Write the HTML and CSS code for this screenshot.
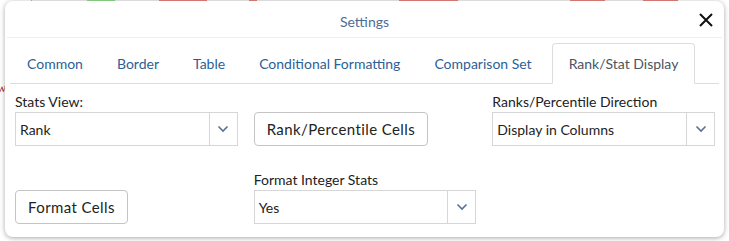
FILE: index.html
```html
<!DOCTYPE html>
<html>
<head>
<meta charset="utf-8">
<link rel="stylesheet" href="styles.css">
</head>
<body>
<div class="page">
  <div class="strip">
    <span class="c w31"></span><span class="c line"></span><span class="c w55"></span><span class="c green w28"></span><span class="c w44"></span><span class="c red w48"></span><span class="c w42"></span><span class="c red w8"></span><span class="c w142"></span><span class="c red w59"></span><span class="c w112"></span><span class="c red w35"></span><span class="c w38"></span><span class="c red w35"></span>
  </div>
  <div class="stray">w</div>
  <div class="vline"></div>
</div>

<div class="modal">
  <div class="modal-header">
    <span class="modal-title">Settings</span>
    <button class="close" aria-label="Close">
      <svg width="14" height="14" viewBox="0 0 14 14"><path d="M1 1 L13 13 M13 1 L1 13" stroke="#111" stroke-width="2" fill="none"/></svg>
    </button>
  </div>
  <div class="tabs-wrap">
    <ul class="tabs">
      <li class="tab">Common</li>
      <li class="tab">Border</li>
      <li class="tab">Table</li>
      <li class="tab">Conditional Formatting</li>
      <li class="tab">Comparison Set</li>
      <li class="tab active">Rank/Stat Display</li>
    </ul>
  </div>
  <div class="body">
    <div class="grid">
      <div class="field">
        <label class="label">Stats View:</label>
        <div class="select"><span class="value">Rank</span><span class="arrow"><svg width="12" height="8" viewBox="0 0 12 8"><path d="M1.5 1.5 L6 6 L10.5 1.5" stroke="#5a7190" stroke-width="1.6" fill="none"/></svg></span></div>
      </div>
      <div class="field end">
        <button class="btn">Rank/Percentile Cells</button>
      </div>
      <div class="field">
        <label class="label">Ranks/Percentile Direction</label>
        <div class="select"><span class="value">Display in Columns</span><span class="arrow"><svg width="12" height="8" viewBox="0 0 12 8"><path d="M1.5 1.5 L6 6 L10.5 1.5" stroke="#5a7190" stroke-width="1.6" fill="none"/></svg></span></div>
      </div>
      <div class="field end">
        <button class="btn">Format Cells</button>
      </div>
      <div class="field">
        <label class="label">Format Integer Stats</label>
        <div class="select"><span class="value">Yes</span><span class="arrow"><svg width="12" height="8" viewBox="0 0 12 8"><path d="M1.5 1.5 L6 6 L10.5 1.5" stroke="#5a7190" stroke-width="1.6" fill="none"/></svg></span></div>
      </div>
      <div class="field"></div>
    </div>
  </div>
</div>
</body>
</html>
```

FILE: styles.css
```css
* { box-sizing: border-box; }
html, body { margin: 0; padding: 0; background: #fff; }
body { font-family: Lato, "Open Sans", sans-serif; width: 729px; height: 241px; overflow: hidden; position: relative; }

.page { height: 241px; overflow: hidden; }
.strip { display: flex; height: 12px; }
.c { display: block; height: 12px; background: #f3f3f3; }
.c.line { width: 1px; background: #bbb; }
.green { background: #8fdc8a !important; }
.red { background: #e8847c !important; }
.w8 { width: 8px; } .w28 { width: 28px; } .w31 { width: 31px; background: #fff; } .w35 { width: 35px; } .w38 { width: 38px; }
.w42 { width: 42px; } .w44 { width: 44px; } .w48 { width: 48px; } .w55 { width: 55px; } .w59 { width: 59px; }
.w112 { width: 112px; } .w142 { width: 142px; }
.stray { color: #b0302a; font-family: "Liberation Serif", serif; font-size: 13px; line-height: 15px; margin: 68px 0 0 -3px; }
.vline { width: 1px; height: 140px; background: #ccc; margin-left: 31px; }

.modal {
  position: absolute;
  top: 1px; left: 5px;
  width: 719px; height: 236px;
  background: #fff;
  border-radius: 8px;
  box-shadow: 0 1px 5px rgba(0,0,0,0.35);
  display: flex; flex-direction: column;
}
.modal-header {
  height: 37px;
  border-bottom: 1px solid #eee;
  margin: 0 2px;
  display: flex; align-items: center; justify-content: center;
  position: relative;
}
.modal-title { font-size: 14px; color: #4e6d96; padding-top: 4px; }
.close {
  position: absolute; right: 9px; top: 12px;
  background: none; border: 0; padding: 0; width: 14px; height: 14px;
  display: flex;
}

.tabs-wrap { padding: 5px 5px 0 5px; }
.tabs {
  list-style: none; margin: 0; padding: 0;
  display: flex;
  border-bottom: 1px solid #ddd;
}
.tab {
  height: 41px;
  padding: 0 16px;
  border: 1px solid transparent;
  border-top-left-radius: 4px; border-top-right-radius: 4px;
  margin-bottom: -1px;
  display: flex; align-items: center;
  font-size: 14px; color: #2b5f97;
  white-space: nowrap;
}
.tab.active {
  color: #4b5561;
  border-color: #ddd #ddd #fff;
  background: #fff;
  margin-left: 3px;
}

.body { padding: 9px 9px 0 10px; }
.grid {
  display: grid;
  grid-template-columns: repeat(3, 1fr);
  column-gap: 16px;
  row-gap: 25px;
}
.field { display: flex; flex-direction: column; }
.field.end { justify-content: flex-end; align-items: flex-start; }
.label { font-size: 14px; color: #222; line-height: 17px; margin-bottom: 2px; }
.select {
  height: 34px;
  border: 1px solid #d6d6d6;
  display: flex; align-items: stretch;
}
.value { flex: 1; display: flex; align-items: center; padding-left: 4px; font-size: 14px; color: #222; }
.arrow {
  width: 28px; border-left: 1px solid #d6d6d6;
  display: flex; align-items: center; justify-content: center;
}
.btn {
  height: 34px;
  margin: 0;
  font-family: Lato, "Open Sans", sans-serif;
  font-size: 15px; color: #222;
  letter-spacing: 0.4px;
  background: #fff;
  border: 1px solid #c4c4c4;
  border-radius: 4px;
  padding: 0 12px;
}
```
